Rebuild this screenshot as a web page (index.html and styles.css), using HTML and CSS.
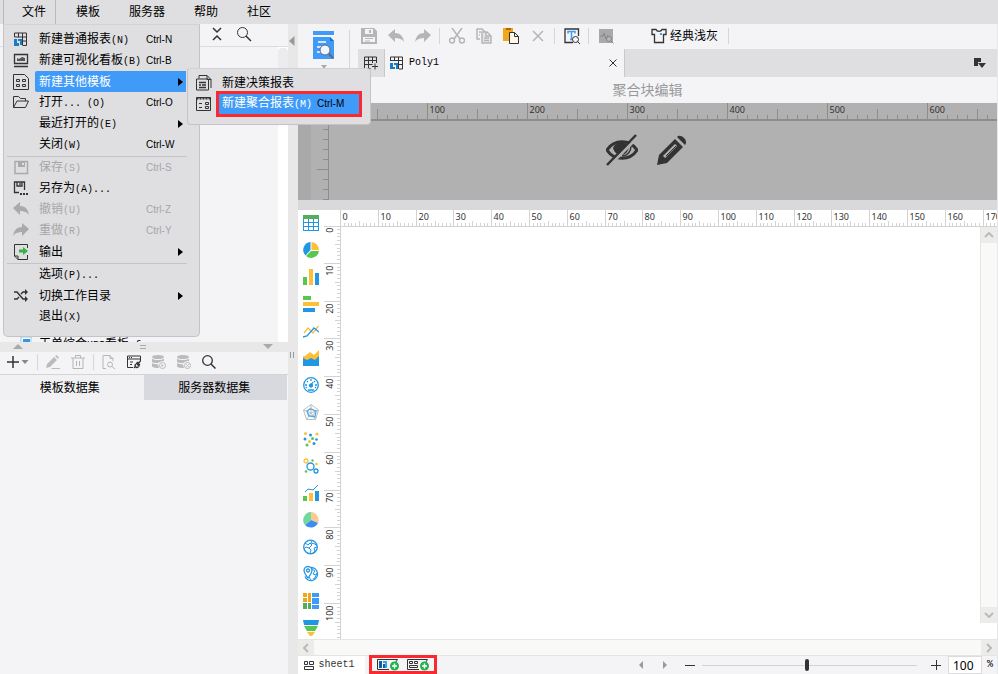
FILE: index.html
```html
<!DOCTYPE html>
<html lang="zh-CN">
<head>
  <meta charset="UTF-8" />
  <meta name="viewport" content="width=device-width, initial-scale=1" />
  <title>Poly1</title>
  <link rel="stylesheet" href="styles.css">
</head>
<body>
  <nav class="menubar">
    <button class="menubar-item open">文件</button>
    <button class="menubar-item">模板</button>
    <button class="menubar-item">服务器</button>
    <button class="menubar-item">帮助</button>
    <button class="menubar-item">社区</button>
  </nav>

  <div class="workspace">
    <aside class="side">
      <div class="side-tools">
        <button class="icon-btn" title="收起"><svg width="12" height="16" viewBox="0 0 12 16" class="line heavy"><path d="M2 2l4 4 4-4M2 14l4-4 4 4"/></svg></button>
        <button class="icon-btn" title="搜索"><svg width="16" height="16" viewBox="0 0 16 16" class="line"><circle cx="6.500" cy="6.500" r="5"/><path d="M10 10l5 5" stroke-width="1.500"/></svg></button>
      </div>
      <div class="tree">
        <div class="tree-list">
          <div class="tree-item">
            <svg width="12" height="14" viewBox="0 0 12 14"><path d="M1 1h10v12H1z" fill="#fff" stroke="#8ecbea"/><path d="M3 3h7v6H3z" fill="#3a95dc"/></svg>
            <span>工单综合<span class="mono">KPI</span>看板<span class="mono">.frm</span></span>
          </div>
        </div>
        <div class="tree-scroll"><div class="tree-thumb"></div></div>
      </div>
      <div class="h-splitter">
        <svg width="10" height="6" viewBox="0 0 10 6"><path d="M0 5l5-5 5 5z" fill="#aaa"/></svg>
        <svg width="6" height="4" viewBox="0 0 6 4"><path d="M0 .5h6M0 3.500h6" stroke="#aaa"/></svg>
        <svg width="10" height="6" viewBox="0 0 10 6"><path d="M0 0l5 5 5-5z" fill="#aaa"/></svg>
      </div>
      <div class="data-tools">
        <button class="icon-btn add" title="新增"><svg width="22" height="14" viewBox="0 0 22 14"><path d="M0 7h12M6 1v12" stroke="#333" stroke-width="1.500"/><path d="M14.500 5h7l-3.500 4z" fill="#888"/></svg></button>
        <span class="sep"></span>
        <button class="icon-btn" title="编辑"><svg width="14" height="14" viewBox="0 0 14 14" fill="#bbb"><path d="M0 13l1-4 7-7 3 3-7 7zM9 1l1.500-1L13 2.500 12 4z"/><path d="M6 13h8v1H5z"/></svg></button>
        <button class="icon-btn" title="删除"><svg width="14" height="14" viewBox="0 0 14 14" class="line pale"><path d="M0 3h14M4.500 3V.5h5V3M2 3v10.500h10V3M5.500 6v5M8.500 6v5"/></svg></button>
        <span class="sep"></span>
        <button class="icon-btn" title="预览"><svg width="14" height="14" viewBox="0 0 14 14" class="line pale"><path d="M4 13.500H1V.5h7l3 3V6M8 .5v3h3"/><circle cx="8" cy="9.500" r="2.500"/><path d="M10 11.500l3 2.500"/></svg></button>
        <button class="icon-btn" title="连接"><svg width="14" height="14" viewBox="0 0 14 14" class="line"><path d="M6 12.500H.5V1h13v5M.5 4h13M2 2.500h1M4 2.500h1M3 7h3M3 9.500h2"/><path d="M7 13l2-2M9 8l3.500 3.500M10 7l3 3M8.500 9L8 11l1.500 1.500 2-.5M11.500 8l2-2" stroke-width="1.300"/></svg></button>
        <button class="icon-btn" title="启用缓存"><svg width="14" height="14" viewBox="0 0 14 14" fill="#bbb"><ellipse cx="6" cy="2" rx="6" ry="2"/><path d="M0 3.500c2 2 10 2 12 0V6C9 6 7 7 6.500 8 4 8 1 8 0 7zM0 8c2 1.200 4 1.200 6 1.200L7 13C4 13 1 13 0 11.500z"/><circle cx="10.500" cy="10.500" r="3" fill="#f4f4f7" stroke="#bbb"/><path d="M9.500 9l2.500 1.500L9.500 12z"/></svg></button>
        <button class="icon-btn" title="清除缓存"><svg width="14" height="14" viewBox="0 0 14 14" fill="#bbb"><ellipse cx="6" cy="2" rx="6" ry="2"/><path d="M0 3.500c2 2 10 2 12 0V6C9 6 7 7 6.500 8 4 8 1 8 0 7zM0 8c2 1.200 4 1.200 6 1.200L7 13C4 13 1 13 0 11.500z"/><circle cx="10.500" cy="10.500" r="3" fill="#f4f4f7" stroke="#bbb"/><path d="M9.300 9.300l2.400 2.400M11.700 9.300l-2.400 2.400" stroke="#bbb"/></svg></button>
        <button class="icon-btn" title="搜索"><svg width="14" height="14" viewBox="0 0 14 14" class="line"><circle cx="5.500" cy="5.500" r="4.800" stroke-width="1.300"/><path d="M9 9l4.500 4.500" stroke-width="1.500"/></svg></button>
      </div>
      <div class="data-tabs">
        <button class="data-tab active">模板数据集</button>
        <button class="data-tab">服务器数据集</button>
      </div>
    </aside>

    <div class="v-splitter">
      <svg width="6" height="10" viewBox="0 0 6 10"><path d="M5.500 0v10L0 5z" fill="#999"/></svg>
      <svg width="4" height="6" viewBox="0 0 4 6"><path d="M.5 0v6M3.500 0v6" stroke="#999"/></svg>
    </div>

    <main class="editor">
      <div class="editor-head">
        <button class="preview-btn" title="预览">
          <svg width="22" height="38" viewBox="0 0 22 38"><path d="M0 0h21v4H0zM0 6h17l4 4v18H0z" fill="#409bf8"/><path d="M17 6v4h4z" fill="#1c6fc4"/><path d="M5 11h8M4 16h5M4 21h6" stroke="#fff" stroke-width="1.500"/><circle cx="12" cy="19" r="5" fill="#eef6ff" stroke="#667"/><path d="M16 23l4 4" stroke="#667" stroke-width="2"/><path d="M8 34h6l-3 4z" fill="#aaa"/></svg>
        </button>
        <span class="sep"></span>
        <div class="head-main">
          <div class="toolbar">
            <button class="tool" title="保存"><svg width="16" height="16" viewBox="0 0 16 16"><path d="M0 0h13l3 3v13H0z" fill="#b5b5b7"/><path d="M4 1h8v5H4zM2 9h12v5H2z" fill="#f4f4f7"/><path d="M8 2h2v3H8zM4 10h8v1H4zM4 12.500h5v1H4z" fill="#b5b5b7"/></svg></button>
            <button class="tool" title="撤销"><svg width="16" height="16" viewBox="0 0 16 16"><path d="M7 1v4c5 0 8 3 9 9-2-3-5-4-9-4v4L0 7z" fill="#b5b5b7"/></svg></button>
            <button class="tool" title="重做"><svg width="16" height="16" viewBox="0 0 16 16"><path d="M9 1v4c-5 0-8 3-9 9 2-3 5-4 9-4v4l7-7z" fill="#b5b5b7"/></svg></button>
            <span class="sep"></span>
            <button class="tool" title="剪切"><svg width="16" height="16" viewBox="0 0 16 16" class="line pale heavy"><path d="M3 0l8 11M13 0L5 11"/><circle cx="3" cy="12.500" r="2.500"/><circle cx="13" cy="12.500" r="2.500"/></svg></button>
            <button class="tool" title="复制"><svg width="16" height="16" viewBox="0 0 16 16" class="line pale heavy"><path d="M4 11H1V1h5l3 3M3 4h2M3 7h1"/><path d="M6 4h5l4 4v7H6zM10 4v4h5M8 10h5M8 12.500h5" fill="#e6e6e8"/></svg></button>
            <button class="tool" title="粘贴"><svg width="16" height="16" viewBox="0 0 16 16"><path d="M0 0h10v5H6v8H0z" fill="#f0a818"/><path d="M3 0h5v2H3z" fill="#b0640c"/><path d="M6.500 4.500h5l4 4v7h-9z" fill="#fff8e6" stroke="#333"/><path d="M11.500 4.500v4h4" fill="none" stroke="#333"/></svg></button>
            <button class="tool" title="删除"><svg width="12" height="12" viewBox="0 0 12 12" class="line pale heavy"><path d="M1 1l10 10M11 1L1 11"/></svg></button>
            <span class="sep"></span>
            <button class="tool" title="查找文本"><svg width="16" height="16" viewBox="0 0 16 16" class="line"><path d="M9 14.500H1V1h13.500v7" stroke-width="1.300"/><path d="M4 5.500v-2h7v2M7.500 3.500v8M6 11.500h3" stroke="#409bf8" stroke-width="1.500"/><circle cx="11.500" cy="11.500" r="3" fill="#f4f4f7"/><path d="M13.500 13.500L16 16"/></svg></button>
            <span class="sep"></span>
            <button class="tool" title="性能分析"><svg width="16" height="16" viewBox="0 0 16 16"><path d="M1 1h14v14H1z" fill="#a9a9ab"/><path d="M2 8h3l1-3 2 6 2-4" fill="none" stroke="#85858a"/><circle cx="11" cy="11" r="2.500" fill="#b8b8ba" stroke="#85858a"/><path d="M13 13l2.500 2.500" stroke="#85858a"/></svg></button>
            <button class="theme"><svg width="16" height="16" viewBox="0 0 16 16" class="line"><path d="M5 1.500L1 1.500v5h2.500v8h9v-8H15v-5h-4c-1 2.500-5 2.500-6 0z" stroke-width="1.300"/><path d="M9 5h2v2H9z" fill="#409bf8" stroke="none"/></svg>经典浅灰</button>
            <span class="sep"></span>
          </div>
          <div class="file-tabs">
            <button class="new-tab" title="新建"><svg width="14" height="14" viewBox="0 0 14 14" class="line"><path d="M6.500 12.500H.5V1h12v6M.5 4.500h12M.5 8.500h8M4.500 1v11.500M8.500 1v6M11 7.500v6M8 10.500h6"/></svg></button>
            <div class="file-tab">
              <svg width="14" height="14" viewBox="0 0 14 14"><path d="M.5 5V1h12v12H9M.5 4.500h12M9 8.500h3.500M4.500 1v3.500M8.500 1v12" fill="none" stroke="#333"/><path d="M0 7h3v4h2v2H0zM4 7h4v6H6V9H4z" fill="#1b7cc6"/></svg>
              <span class="mono file-name">Poly1</span>
              <button class="icon-btn" title="关闭"><svg width="8" height="8" viewBox="0 0 8 8" class="line"><path d="M.5.5l7 7M7.500.5l-7 7"/></svg></button>
            </div>
            <button class="icon-btn more" title="更多"><svg width="12" height="10" viewBox="0 0 12 10"><path d="M0 0h7v4H4v4H0z" fill="#333"/><path d="M4 5h8l-4 5z" fill="#333"/></svg></button>
          </div>
        </div>
      </div>

      <h1 class="block-title">聚合块编辑</h1>
      <section class="poly">
        <div class="poly-top"><svg class="ruler" data-step="10" data-unit="10" data-count="66" data-size="17"></svg></div>
        <div class="poly-body">
          <div class="poly-side"><svg class="ruler" data-dir="y" data-origin="-2" data-step="10" data-unit="10" data-count="8" data-size="17"></svg></div>
          <div class="poly-actions">
            <button class="icon-btn" title="隐藏"><svg width="32" height="32" viewBox="0 0 32 32"><path d="M1 16c7-11 23-11 30 0-7 11-23 11-30 0z" fill="none" stroke="#333" stroke-width="3"/><path d="M7 14c3-7 13-7 16-1-1 5-4 8-8 8-4 0-7-3-8-7z" fill="#333"/><path d="M25 12c0 6-4 10-9 10" fill="none" stroke="#333" stroke-width="1.500"/><path d="M3 32L32 3" stroke="#b1b1b1" stroke-width="3"/><path d="M1 31L30 1" stroke="#333" stroke-width="2.500"/></svg></button>
            <button class="icon-btn" title="编辑"><svg width="32" height="32" viewBox="0 0 32 32"><path d="M1 31l2-10L19 5l8 8-16 16z" fill="#333"/><path d="M21 3c3-4 12 3 8 8z" fill="#333"/><path d="M8 23L20 11" stroke="#b1b1b1" stroke-width="3"/><path d="M10 22L20 12" stroke="#333"/></svg></button>
          </div>
        </div>
      </section>

      <section class="sheet">
        <div class="widgets">
          <button title="表格"><svg viewBox="0 0 16 16"><path d="M0 0h16v16H0z" fill="#2196e3"/><path d="M0 0h16v4H0z" fill="#55ad5b"/><path d="M1 4h4v3H1zM6 4h4v3H6zM11 4h4v3h-4zM1 8h4v3H1zM6 8h4v3H6zM11 8h4v3h-4zM1 12h4v3H1zM6 12h4v3H6zM11 12h4v3h-4z" fill="#fff"/></svg></button>
          <button title="饼图"><svg viewBox="0 0 16 16"><path d="M8.500 0A8 8 0 0 1 16 8H8.500z" fill="#fbc035"/><path d="M7.500 0v8l-5 5.500A8 8 0 0 1 7.500 0z" fill="#2196e3"/><path d="M8 9h8a8 8 0 0 1-13 5z" fill="#57c84d"/></svg></button>
          <button title="柱形图"><svg viewBox="0 0 16 16"><path d="M0 8h4v8H0z" fill="#57c84d"/><path d="M6 0h4v16H6z" fill="#fbc035"/><path d="M12 4h4v12h-4z" fill="#2196e3"/></svg></button>
          <button title="条形图"><svg viewBox="0 0 16 16"><path d="M0 0h8v4H0z" fill="#57c84d"/><path d="M0 6h16v4H0z" fill="#fbc035"/><path d="M0 12h12v4H0z" fill="#2196e3"/></svg></button>
          <button title="折线图"><svg viewBox="0 0 16 16" class="line"><path d="M1 10l4-5 5 5 5.500-7" stroke="#fbc035"/><path d="M0 14l4-1 7-8 5 4" stroke="#2196e3"/></svg></button>
          <button title="面积图"><svg viewBox="0 0 16 16"><path d="M0 6h2l5-4 4 3 5-5v16H0z" fill="#fbc035"/><path d="M0 8l4 2 4-2 4 2 4-4v10H0z" fill="#2196e3"/></svg></button>
          <button title="仪表盘"><svg viewBox="0 0 16 16" class="line blue"><circle cx="8" cy="8" r="7.300"/><path d="M8 2v2M2 8h2M12 8h2M4 4l1 1M12 4l-1 1M5 13h6M3 11l1-1M13 11l-1-1"/><circle cx="8" cy="8.500" r="1.500" fill="#2196e3"/><path d="M8 8l2-3"/></svg></button>
          <button title="雷达图"><svg viewBox="0 0 16 16" class="line"><path d="M8 .5L15.500 6l-3 9.500h-9L.5 6zM8 4l4 3-1.500 5h-5L4 7zM8 .5V9L.5 6M8 9l7.500-3M8 9l-4.500 6.500M8 9l4.500 6.500" stroke="#b9bcc0" stroke-width="1"/><path d="M7 5l6 2-1 6-6-1-2-5z" stroke="#4aaeea"/></svg></button>
          <button title="散点图"><svg viewBox="0 0 16 16"><g fill="#2196e3"><circle cx="7.500" cy="4" r="1.500"/><circle cx="2" cy="8" r="1.500"/><circle cx="11" cy="12.500" r="1.500"/><circle cx="13.500" cy="8.500" r="1.300"/></g><g fill="#fbc035"><circle cx="2.500" cy="2.500" r="1.500"/><circle cx="14" cy="3" r="1.500"/><circle cx="6.500" cy="10.500" r="1.500"/></g><g fill="#57c84d"><circle cx="9.500" cy="7.500" r="1.500"/><circle cx="4" cy="14" r="1.500"/></g></svg></button>
          <button title="气泡图"><svg viewBox="0 0 16 16" class="line blue"><circle cx="7.500" cy="8.500" r="3.500"/><circle cx="13" cy="13" r="2"/><circle cx="3" cy="3" r="2" stroke="#fbc035"/><circle cx="9.500" cy="2.500" r="1.200" fill="#57c84d" stroke="none"/><circle cx="13.500" cy="6" r="1.300" fill="#fbc035" stroke="none"/><circle cx="3" cy="13.500" r="1.300" fill="#57c84d" stroke="none"/></svg></button>
          <button title="组合图"><svg viewBox="0 0 16 16"><path d="M0 11h4v5H0z" fill="#57c84d"/><path d="M6 8h4v8H6z" fill="#fbc035"/><path d="M12 6h4v10h-4z" fill="#2196e3"/><path d="M2 7l3-3 5 1 5-5" fill="none" stroke="#2196e3"/></svg></button>
          <button title="立体饼图"><svg viewBox="0 0 16 16"><path d="M8 8V0a8 8 0 0 1 7 11z" fill="#f8cc90"/><path d="M8 8l7 3a8 8 0 0 1-13 2z" fill="#3d8df0"/><path d="M8 8l-6 5A8 8 0 0 1 8 0z" fill="#6ed99b"/></svg></button>
          <button title="地图"><svg viewBox="0 0 16 16" class="line blue"><circle cx="7.500" cy="8" r="6.800"/><path d="M2 4l3 2 2-2 2 2-3 3-3-1-2 2M9 2l-1 2 4 1 2 2M14 8l-3 1 1 3-2 2M6 9l2 2-1 4" stroke-width="1"/></svg></button>
          <button title="点地图"><svg viewBox="0 0 16 16" class="line blue"><path d="M8 1.500a6.500 6.500 0 1 1-6 9M5 12C3 9 1 7 1 4.500a4 4 0 0 1 8 0C9 7 7 9 5 12z"/><circle cx="5" cy="4.500" r="1.500"/><path d="M9 3l3 2-2 3 3 1M14 7l-2 5-2 1M6 11l2 3" stroke-width="1"/></svg></button>
          <button title="矩形树图"><svg viewBox="0 0 16 16"><path d="M0 0h4v4H0zM5 0h3v9H5zM0 5h4v4H0z" fill="#f0a818"/><path d="M0 10h4v6H0zM5 10h3v6H5z" fill="#55ad5b"/><path d="M9 0h7v4H9zM9 5h7v6H9zM9 12h7v4H9z" fill="#409bf8"/></svg></button>
          <button title="漏斗图"><svg viewBox="0 0 16 16"><path d="M0 0h16l-1 5H1z" fill="#2196e3"/><path d="M1 6h14l-3 5H4z" fill="#57c84d"/><path d="M4 12h8l-3 4H7z" fill="#fbc035"/></svg></button>
        </div>
        <div class="sheet-main">
          <div class="sheet-top"><svg class="ruler" data-step="1" data-unit="3.78" data-count="173" data-size="16"></svg></div>
          <div class="sheet-row">
            <div class="sheet-side"><svg class="ruler" data-dir="y" data-origin="-2" data-step="1" data-unit="3.78" data-count="109" data-size="16"></svg></div>
            <div class="canvas"></div>
            <div class="scroll-v">
              <button class="scroll-btn" title="向上"><svg width="10" height="6" viewBox="0 0 10 6"><path d="M1 5l4-4 4 4"/></svg></button>
              <button class="scroll-btn" title="向下"><svg width="10" height="6" viewBox="0 0 10 6"><path d="M1 1l4 4 4-4"/></svg></button>
            </div>
          </div>
        </div>
      </section>

      <div class="scroll-h">
        <button class="scroll-btn" title="向左"><svg width="6" height="10" viewBox="0 0 6 10"><path d="M5 1L1 5l4 4"/></svg></button>
        <button class="scroll-btn" title="向右"><svg width="6" height="10" viewBox="0 0 6 10"><path d="M1 1l4 4-4 4"/></svg></button>
      </div>

      <footer class="sheetbar">
        <button class="sheet-tab">
          <svg width="10" height="9" viewBox="0 0 10 9" class="line"><path d="M.5.5h3v3h-3zM5.500.5h4v3h-4zM.5 5.500h9v3h-9z"/></svg>
          <span class="mono">sheet1</span>
        </button>
        <div class="add-sheets">
          <button class="icon-btn" title="新建报表块"><svg width="22" height="13" viewBox="0 0 22 13"><path d="M12 11.500H.5V1.500h20l-2 3" fill="none" stroke="#333"/><path d="M2 3h3v7H2zM6 6h2v4H6z" fill="#0f5fa8"/><path d="M6 3h4v7H8V5H6z" fill="#39a5dc"/><circle cx="17.500" cy="8" r="4.500" fill="#22b14c"/><path d="M15 8h5M17.500 5.500v5" stroke="#fff" stroke-width="1.500"/></svg></button>
          <button class="icon-btn" title="新建聚合块"><svg width="22" height="13" viewBox="0 0 22 13"><path d="M12 11.500H.5V1.500h20l-2 3M2.500 3.500h3v2h-3zM7.500 3.500h3v2h-3zM2.500 7.500h8v2h-8z" fill="none" stroke="#333"/><circle cx="17.500" cy="8" r="4.500" fill="#22b14c"/><path d="M15 8h5M17.500 5.500v5" stroke="#fff" stroke-width="1.500"/></svg></button>
        </div>
        <div class="pager">
          <button class="icon-btn" title="上一页"><svg width="4" height="8" viewBox="0 0 4 8"><path d="M4 0v8L0 4z" fill="#999"/></svg></button>
          <button class="icon-btn" title="下一页"><svg width="4" height="8" viewBox="0 0 4 8"><path d="M0 0v8l4-4z" fill="#999"/></svg></button>
        </div>
        <div class="zoom">
          <button class="icon-btn" title="缩小"><svg width="10" height="10" viewBox="0 0 10 10" class="line"><path d="M0 5.500h10"/></svg></button>
          <input type="range" class="zoom-range" min="0" max="200" value="98" aria-label="缩放">
          <button class="icon-btn" title="放大"><svg width="10" height="10" viewBox="0 0 10 10" class="line"><path d="M0 5.500h10M5.500 0v10"/></svg></button>
          <input type="text" class="zoom-value" id="zoomValue" value="100">
          <label class="mono" for="zoomValue">%</label>
        </div>
      </footer>
    </main>
  </div>

  <div class="menu">
    <button class="menu-item"><svg width="16" height="16" viewBox="0 0 16 16" class="line"><path d="M1.500 5V1h12v12.500H10M1.500 5h12M10 9h3.500M5.500 1v4M9.500 1v12.500"/><path d="M1 7h3v4h2v3H1zM5 7h4v6H7v-4H5z" fill="#1b7cc6" stroke="none"/></svg><span class="menu-body"><span>新建普通报表<span class="mono">(N)</span></span><kbd>Ctrl-N</kbd></span></button>
    <button class="menu-item"><svg width="16" height="16" viewBox="0 0 16 16" class="line"><path d="M1.500 1.500h13v9h-13zM1 13.500h14" stroke-width="1.300"/><path d="M4 8V5l2 1 3-2 3 1v3z" fill="#555" stroke="none"/></svg><span class="menu-body"><span>新建可视化看板<span class="mono">(B)</span></span><kbd>Ctrl-B</kbd></span></button>
    <button class="menu-item selected"><svg width="16" height="16" viewBox="0 0 16 16" class="line"><path d="M.5.5h11l4 4v11H.5zM3.500 5.500h3v2h-3zM9.500 5.500h3v2h-3zM3.500 10.500h3v2h-3zM9.500 10.500h3v2h-3z"/></svg><span class="menu-body"><span>新建其他模板</span><i class="arrow"></i></span></button>
    <button class="menu-item"><svg width="16" height="16" viewBox="0 0 16 16" class="line"><path d="M.5 12.500v-11h5l2 2h5v2.500M.5 12.500h12L15.500 6H4z"/></svg><span class="menu-body"><span>打开<span class="mono">... (O)</span></span><kbd>Ctrl-O</kbd></span></button>
    <button class="menu-item"><span></span><span class="menu-body"><span>最近打开的<span class="mono">(E)</span></span><i class="arrow"></i></span></button>
    <button class="menu-item"><span></span><span class="menu-body"><span>关闭<span class="mono">(W)</span></span><kbd>Ctrl-W</kbd></span></button>
    <hr>
    <button class="menu-item" disabled><svg width="16" height="16" viewBox="0 0 16 16"><path d="M2 1.500h12.500v12H2z" fill="none" stroke="#aaa" stroke-width="1.500"/><path d="M5 2h7v5H5z" fill="#aaa"/><path d="M9 3h2v2H9z" fill="#dfdfe1"/></svg><span class="menu-body"><span>保存<span class="mono">(S)</span></span><kbd>Ctrl-S</kbd></span></button>
    <button class="menu-item"><svg width="16" height="16" viewBox="0 0 16 16" class="line"><path d="M6 11.500H1.500V1h10v8M4 1v4h5V1M7 2v2" stroke-width="1.300"/><path d="M7 12h2v2H7zM10 12h2v2h-2zM13 12h2v2h-2z" fill="#333" stroke="none"/></svg><span class="menu-body"><span>另存为<span class="mono">(A)...</span></span></span></button>
    <button class="menu-item" disabled><svg width="16" height="16" viewBox="0 0 16 16"><path d="M7 0v4c5 0 8 3 9 9-2-3-5-4-9-4v4L0 6z" fill="#aaa"/></svg><span class="menu-body"><span>撤销<span class="mono">(U)</span></span><kbd>Ctrl-Z</kbd></span></button>
    <button class="menu-item" disabled><svg width="16" height="16" viewBox="0 0 16 16"><path d="M9 0v4c-5 0-8 3-9 9 2-3 5-4 9-4v4l7-7z" fill="#aaa"/></svg><span class="menu-body"><span>重做<span class="mono">(R)</span></span><kbd>Ctrl-Y</kbd></span></button>
    <button class="menu-item"><svg width="16" height="16" viewBox="0 0 16 16" class="line"><path d="M14.500 4V.5h-13V12L5 15.500h9.500V11M1.500 12H5v3.500"/><path d="M6 5.500h4V3l5 4-5 4V8.500H6z" fill="#35b24a" stroke="none"/></svg><span class="menu-body"><span>输出</span><i class="arrow"></i></span></button>
    <hr>
    <button class="menu-item"><span></span><span class="menu-body"><span>选项<span class="mono">(P)...</span></span></span></button>
    <button class="menu-item"><svg width="16" height="16" viewBox="0 0 16 16" class="line"><path d="M1 4h3l6 7h3M1 11h3l2-2M8 6l2-2h3" stroke-width="1.500"/><path d="M12 1l3 3-3 3zM12 8l3 3-3 3z" fill="#333" stroke="none"/></svg><span class="menu-body"><span>切换工作目录</span><i class="arrow"></i></span></button>
    <button class="menu-item"><span></span><span class="menu-body"><span>退出<span class="mono">(X)</span></span></span></button>
  </div>

  <div class="menu submenu">
    <button class="menu-item"><svg width="16" height="16" viewBox="0 0 16 16" class="line"><path d="M3 3.500V.5h8l4 4V13M.5 4h12v11H.5zM11 .5v4h4"/><path d="M3 7.500h7M3 10h2M6 10h4M3 12.500h7" stroke-width="1.500"/></svg><span class="menu-body">新建决策报表</span></button>
    <button class="menu-item marked"><svg width="16" height="16" viewBox="0 0 16 16" class="line"><path d="M.5 1.500h14v13H.5z"/><path d="M.5 2.500h14" stroke-width="2" stroke-dasharray="2 1"/><path d="M3 7.500h3M3 11.500h3M9.500 6.500h3v2h-3zM9.500 10.500h3v2h-3z"/></svg><span class="menu-body"><span>新建聚合报表<span class="mono">(M)</span></span><kbd>Ctrl-M</kbd></span></button>
  </div>

  <script src="ruler.js"></script>
</body>
</html>
```
FILE: styles.css
```css
* {
  box-sizing: border-box;
}
body {
  margin: 0;
  min-height: 100vh;
  display: flex;
  flex-direction: column;
  background: #f4f4f7;
  color: #000;
  font: 12px/16px "Liberation Sans", "Noto Sans CJK SC", sans-serif;
}
button, input {
  font: inherit;
  color: inherit;
  margin: 0;
}
button {
  border: none;
  padding: 0;
  background: none;
  display: flex;
  align-items: center;
  justify-content: center;
  white-space: nowrap;
}
svg {
  display: block;
  flex: none;
}
.mono {
  font-family: "Liberation Mono", monospace;
  font-size: 10px;
}
.line {
  fill: none;
  stroke: #333;
}
.heavy {
  stroke-width: 1.5;
}
.pale {
  stroke: #b5b5b7;
}
.blue {
  stroke: #2196e3;
}

/* menu bar */
.menubar {
  display: flex;
  height: 24px;
  padding-left: 3px;
  background: #dfdfe1;
}
.menubar-item {
  padding: 0 14px 1px 15px;
}
.menubar-item.open {
  padding: 0 9px 1px 18px;
  margin-right: 5px;
  border: solid #b9b9bc;
  border-width: 0 1px;
}
.workspace {
  flex: 1;
  display: grid;
  grid-template-columns: 288px 10px minmax(0, 1fr);
}

/* left side */
.side {
  display: flex;
  flex-direction: column;
}
.side-tools {
  display: flex;
  justify-content: flex-end;
  gap: 13px;
  height: 23px;
  padding: 0 36px 2px 0;
  border-bottom: 1px solid #dcdce0;
}
.tree {
  display: flex;
  height: 295px;
  overflow: hidden;
}
.tree-list {
  flex: 1;
  padding: 289px 0 0 20px;
}
.tree-item {
  display: flex;
  gap: 7px;
  white-space: nowrap;
}
.tree-scroll {
  width: 10px;
  background: #fff;
}
.tree-thumb {
  height: 60px;
  margin-top: 1px;
  border-radius: 4px;
  background: #ececee;
}
.h-splitter {
  display: flex;
  align-items: center;
  justify-content: space-between;
  height: 10px;
  padding: 0 15px 0 13px;
  background: #e8e8e8;
}
.data-tools {
  display: flex;
  align-items: center;
  gap: 11px;
  height: 23px;
  padding: 0 0 2px 7px;
  border-bottom: 1px solid #d4d4d8;
}
.data-tools .sep {
  margin: 0 -3px;
}
.sep {
  width: 1px;
  height: 16px;
  background: #d6d6da;
}
.data-tabs {
  display: grid;
  grid-template-columns: 1fr 1fr;
  height: 25px;
  margin-right: 1px;
}
.data-tab {
  padding-right: 2px;
  background: #d8d9de;
}
.data-tab.active {
  padding-right: 4px;
  background: #f1f1f3;
}
.v-splitter {
  display: flex;
  flex-direction: column;
  align-items: center;
  gap: 306px;
  padding: 12px 2px 0 0;
  background: #e8e8e8;
}

/* header of the editor */
.editor {
  display: flex;
  flex-direction: column;
  border-right: 1px solid #e8e8ea;
}
.editor-head {
  display: flex;
  height: 53px;
}
.preview-btn {
  width: 51px;
  align-items: flex-start;
  padding-top: 7px;
}
.editor-head > .sep {
  height: 38px;
  margin-top: 6px;
}
.head-main {
  flex: 1;
}
.toolbar {
  display: flex;
  align-items: center;
  height: 25px;
  padding: 0 0 1px 5px;
}
.toolbar .sep {
  margin: 0 3px;
}
.tool {
  width: 27px;
  height: 24px;
}
.theme {
  gap: 3px;
  margin: 0 7px 0 32px;
}
.file-tabs {
  display: flex;
  height: 28px;
  margin-left: 8px;
  background: #dfdfe1;
}
.new-tab {
  width: 27px;
  border-right: 1px solid #c9c9cc;
}
.file-tab {
  display: flex;
  align-items: center;
  gap: 5px;
  width: 240px;
  padding: 0 7px 0 5px;
  background: #f4f4f7;
  border-right: 1px solid #c9c9cc;
}
.file-name {
  flex: 1;
}
.more {
  margin: 0 11px 0 auto;
}

/* block being edited */
.block-title {
  margin: 0;
  font-size: 14px;
  line-height: 26px;
  font-weight: normal;
  text-align: center;
  color: #999;
}
.poly {
  background: #b1b1b1;
  border-bottom: 10px solid #d9d9db;
}
.ruler {
  flex: 1;
  min-width: 0;
  width: 100%;
  height: auto;
  overflow: hidden;
  font: 9px "Noto Sans", sans-serif;
  fill: #333;
  stroke: none;
}
.ruler path {
  fill: none;
  stroke: #d3d3d6;
}
.poly .ruler path {
  stroke: #8d8d8d;
}
.poly-top {
  display: flex;
  height: 18px;
  padding-left: 29px;
  border-bottom: 2px solid #8d8d8d;
}
.poly-body {
  display: flex;
  height: 79px;
}
.poly-side {
  display: flex;
  width: 31px;
  border-left: 13px solid #a9a9a9;
  border-right: 1px solid #8d8d8d;
}
.poly-actions {
  flex: 1;
  display: flex;
  align-items: flex-start;
  justify-content: center;
  gap: 18px;
  padding: 13px 33px 0 0;
}

/* sheet */
.sheet {
  flex: 1;
  display: flex;
  background: #fff;
}
.widgets {
  display: flex;
  flex-direction: column;
  gap: 11px;
  width: 26px;
  padding: 5px 0 2px 5px;
}
.widgets button, .widgets svg {
  width: 16px;
  height: 16px;
}
.widgets .line {
  stroke-width: 1.3;
}
.sheet-main {
  flex: 1;
  min-width: 0;
  display: flex;
  flex-direction: column;
}
.sheet-top {
  display: flex;
  height: 17px;
  padding-left: 16px;
  border-bottom: 1px solid #d3d3d6;
}
.sheet-row {
  flex: 1;
  display: flex;
}
.sheet-side {
  position: relative;
  width: 17px;
  border-right: 1px solid #d3d3d6;
}
.sheet-side .ruler {
  position: absolute;
  height: 100%;
}
.canvas {
  flex: 1;
}
.scroll-v {
  display: flex;
  flex-direction: column;
  justify-content: space-between;
  width: 17px;
  margin-bottom: 16px;
  background: #f9f9f7;
  border-left: 1px solid #e6e6dc;
}
.scroll-h {
  display: flex;
  justify-content: space-between;
  height: 17px;
  background: #f9f9f7;
  border: solid #e6e6dc;
  border-width: 1px 0;
}
.scroll-btn {
  width: 16px;
  height: 16px;
  background: #ececea;
  fill: none;
  stroke: #bbb;
  stroke-width: 2;
}
.scroll-h .scroll-btn {
  height: 15px;
}

/* bottom bar */
.sheetbar {
  display: flex;
  align-items: center;
  height: 18px;
}
.sheet-tab {
  gap: 4px;
  width: 67px;
  height: 18px;
  padding-right: 4px;
  background: #fff;
  color: #333;
}
.add-sheets {
  display: flex;
  align-items: center;
  gap: 8px;
  height: 19px;
  margin: -1px 0 0 4px;
  padding: 0 5px;
  border: 3px solid #fc2830;
}
.pager {
  display: flex;
  gap: 20px;
  margin-left: auto;
}
.zoom {
  display: flex;
  align-items: center;
  margin-left: 18px;
}
.zoom-range {
  appearance: none;
  width: 215px;
  height: 14px;
  margin: 0 14px 0 7px;
  background: linear-gradient(#d3d3d6, #d3d3d6) center / 100% 1px no-repeat;
}
.zoom-range::-webkit-slider-thumb {
  appearance: none;
  width: 4px;
  height: 12px;
  border-radius: 2px;
  background: #333;
}
.zoom-value {
  width: 34px;
  height: 18px;
  margin: 0 5px 0 7px;
  padding: 0 0 0 4px;
  border: 1px solid #dcdce0;
  background: #fff;
  font-family: "Noto Sans", sans-serif;
}
.zoom label {
  width: 10px;
}

/* drop-down menus */
.menu {
  position: absolute;
  top: 24px;
  left: 3px;
  width: 197px;
  padding: 4px 13px 9px 0;
  background: #dfdfe1;
  border: 1px solid #c4c4c8;
  border-top-color: #d3d3d6;
  border-radius: 0 0 5px 5px;
}
.menu hr {
  margin: 1px -1px 0 3px;
  border: none;
  border-top: 1px solid #c4c4c8;
}
.menu-item {
  display: grid;
  grid-template-columns: 22px 1fr;
  justify-items: start;
  width: 100%;
  height: 21px;
  padding-left: 9px;
  text-align: left;
}
.menu-body {
  display: grid;
  grid-template-columns: 107px 1fr;
  align-items: center;
  width: 100%;
  height: 21px;
  padding-left: 4px;
}
.menu-item:disabled {
  color: #a6a6a8;
}
.menu kbd {
  font: 10px "Liberation Sans", sans-serif;
}
.arrow {
  justify-self: end;
  margin-right: 3px;
  border: solid transparent;
  border-width: 4px 0 4px 5px;
  border-left-color: #000;
}
.selected .menu-body {
  background: #409bf8;
  color: #fff;
  border-radius: 2px 0 0 2px;
}
.submenu {
  top: 68px;
  left: 187px;
  width: 184px;
  padding: 3px 11px 10px 0;
  border-radius: 4px;
}
.submenu .menu-item {
  grid-template-columns: 23px 1fr;
  padding-left: 8px;
}
.submenu .menu-body {
  grid-template-columns: 95px 1fr;
  padding-left: 3px;
}
.marked .menu-body {
  height: 20px;
  background: #409bf8;
  color: #fff;
  outline: 3px solid #fc2830;
}
.marked kbd {
  color: #000;
}
```
FILE: ruler.js
```javascript
// Draws ticks and numbers into every ruler
document.querySelectorAll('.ruler').forEach(svg => {
  const { dir, step, unit, count, size, origin } = svg.dataset;
  const end = Number(size);
  const coarse = step === '10';
  const midLength = coarse ? 11 : 5;
  const shortLength = coarse ? 5 : 3;
  let ticks = '';
  let texts = '';

  for (let i = 0; i <= Number(count); i++) {
    const pos = Math.round(i * unit) + 0.5 + Number(origin || 0);
    const length = i % 10 === 0 ? end : i % 5 === 0 ? midLength : shortLength;

    ticks += dir === 'y' ? `M${end - length} ${pos}H${end}` : `M${pos} ${end - length}V${end}`;

    // the coarse rulers have no number at zero
    if (i % 10 === 0 && !(coarse && i === 0)) {
      const value = i * step;
      texts += dir === 'y'
        ? `<text transform="translate(9 ${pos + 2}) rotate(-90)" text-anchor="end">${value}</text>`
        : `<text x="${pos + 2}" y="10">${value}</text>`;
    }
  }

  svg.innerHTML = `<path d="${ticks}"/>${texts}`;
});
```
